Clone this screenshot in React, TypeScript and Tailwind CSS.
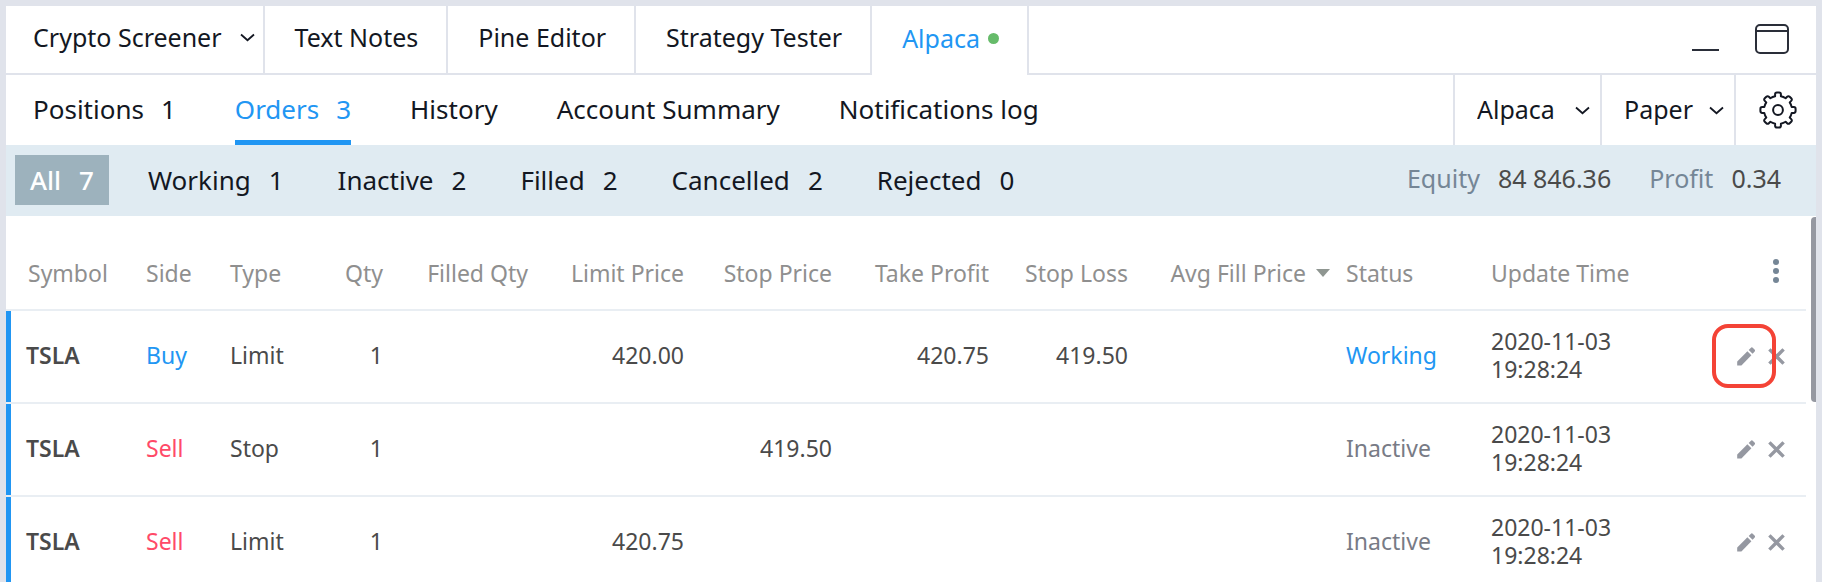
import type { ReactNode } from "react";

const DARK = "text-[#131722]";

function Chevron() {
  return (
    <svg width="15" height="9" viewBox="0 0 15 9" fill="none" stroke="#131722" strokeWidth="1.8" aria-hidden="true">
      <path d="M1 1.5 7.5 7.2 14 1.5" />
    </svg>
  );
}

function GearIcon() {
  const teeth = [0, 45, 90, 135, 180, 225, 270, 315];
  const point = (deg: number, x: number, y: number) => {
    const a = (deg * Math.PI) / 180;
    const px = x * Math.cos(a) - y * Math.sin(a);
    const py = x * Math.sin(a) + y * Math.cos(a);
    return `${px.toFixed(2)} ${py.toFixed(2)}`;
  };
  const outline = teeth
    .map(
      (t, i) =>
        `${i === 0 ? `M${point(t, -2.9, -13.7)}` : `A14 14 0 0 1 ${point(t, -2.9, -13.7)}`} L${point(t, -2.9, -15.8)} Q${point(t, -2.9, -17.6)} ${point(t, -1.1, -17.6)} L${point(t, 1.1, -17.6)} Q${point(t, 2.9, -17.6)} ${point(t, 2.9, -15.8)} L${point(t, 2.9, -13.7)}`,
    )
    .join(" ");
  return (
    <svg width="38" height="38" viewBox="-19 -19 38 38" fill="none" stroke="#131722" strokeWidth="2" strokeLinejoin="round" aria-hidden="true">
      <path d={`${outline} A14 14 0 0 1 ${point(0, -2.9, -13.7)} Z`} />
      <circle r="4.9" />
    </svg>
  );
}

function PencilIcon() {
  return (
    <svg width="18" height="19" viewBox="0 0 18 19" fill="#9598a1" aria-hidden="true">
      <path d="M0.2 18.6V14.4L10.4 4.2l4 4L4.4 18.6z" />
      <path d="M11.7 2.9 13.7.9a1.6 1.6 0 0 1 2.3 0L17.5 2.4a1.6 1.6 0 0 1 0 2.3L15.6 6.8z" />
    </svg>
  );
}

function CrossIcon() {
  return (
    <svg width="17" height="17" viewBox="0 0 17 17" stroke="#9598a1" strokeWidth="3.4" aria-hidden="true">
      <path d="M1.4 1.4 15.6 15.6M15.6 1.4 1.4 15.6" />
    </svg>
  );
}

function TopTab({ children, active = false, className }: { children: ReactNode; active?: boolean; className: string }) {
  return (
    <button
      type="button"
      className={`flex h-[69px] items-center border-r-2 pb-1 ${active ? "text-[#2196f3]" : `border-b-2 ${DARK}`} border-[#e0e3eb] ${className}`}
    >
      {children}
    </button>
  );
}

function SubTab({ label, count, active = false }: { label: string; count?: number; active?: boolean }) {
  return (
    <button
      type="button"
      className={`flex items-center gap-[17px] border-b-[5px] pt-1 ${active ? "border-[#2196f3] text-[#2196f3]" : `border-transparent ${DARK}`}`}
    >
      {label}
      {count !== undefined && <span>{count}</span>}
    </button>
  );
}

function AccountSelect({ label, value, className }: { label: string; value: string; className: string }) {
  return (
    <div className={`grid items-center border-l-2 border-[#e0e3eb] ${className}`}>
      <select
        aria-label={label}
        className={`col-start-1 row-start-1 h-full w-full appearance-none bg-transparent pb-px pl-[22px] ${DARK}`}
      >
        <option>{value}</option>
      </select>
      <span className="pointer-events-none col-start-1 row-start-1 justify-self-end pr-2.5">
        <Chevron />
      </span>
    </div>
  );
}

const filters = [
  { label: "All", count: 7 },
  { label: "Working", count: 1 },
  { label: "Inactive", count: 2 },
  { label: "Filled", count: 2 },
  { label: "Cancelled", count: 2 },
  { label: "Rejected", count: 0 },
];

type Order = {
  side: "Buy" | "Sell";
  type: string;
  limit?: string;
  stop?: string;
  takeProfit?: string;
  stopLoss?: string;
  status: "Working" | "Inactive";
  highlighted?: boolean;
};

const orders: Order[] = [
  { side: "Buy", type: "Limit", limit: "420.00", takeProfit: "420.75", stopLoss: "419.50", status: "Working", highlighted: true },
  { side: "Sell", type: "Stop", stop: "419.50", status: "Inactive" },
  { side: "Sell", type: "Limit", limit: "420.75", status: "Inactive" },
];

const HEAD = "border-b-2 border-[#e9eef3] pb-[22px] align-bottom font-normal";
const CELL = "border-b-2 border-[#e9eef3] pb-1";

function OrderRow({ order }: { order: Order }) {
  return (
    <tr className="h-[93px]">
      <td className={`${CELL} pl-5 font-semibold shadow-[inset_5px_0_0_#2196f3]`}>TSLA</td>
      <td className={`${CELL} pl-4 ${order.side === "Buy" ? "text-[#2196f3]" : "text-[#ff4a68]"}`}>{order.side}</td>
      <td className={`${CELL} pl-4`}>{order.type}</td>
      <td className={`${CELL} pr-4 text-right`}>1</td>
      <td className={CELL} />
      <td className={`${CELL} pr-4 text-right`}>{order.limit}</td>
      <td className={`${CELL} pr-4 text-right`}>{order.stop}</td>
      <td className={`${CELL} pr-4 text-right`}>{order.takeProfit}</td>
      <td className={`${CELL} pr-4 text-right`}>{order.stopLoss}</td>
      <td className={CELL} />
      <td className={`${CELL} pl-4 ${order.status === "Working" ? "text-[#2196f3]" : "text-[#787b86]"}`}>{order.status}</td>
      <td className={`${CELL} pl-4 whitespace-normal`}>2020-11-03 19:28:24</td>
      <td className="border-b-2 border-[#e9eef3] pr-[21px]">
        <div className="flex items-center justify-end gap-[13px]">
          <button type="button" aria-label="Edit order" className="relative">
            <PencilIcon />
            {order.highlighted && (
              <span className="pointer-events-none absolute -top-[23px] -left-[25px] z-10 size-16 rounded-2xl border-4 border-[#f44336]" />
            )}
          </button>
          <button type="button" aria-label="Cancel order">
            <CrossIcon />
          </button>
        </div>
      </td>
    </tr>
  );
}

export default function App() {
  return (
    <div className="h-screen overflow-hidden bg-[#e0e3eb] px-1.5 pt-1.5 font-['Noto_Sans',sans-serif]">
      <main className="flex h-full flex-col bg-white">
        <header className="flex text-[25px]">
          <nav className="flex whitespace-nowrap">
            <TopTab className="gap-[18px] pr-2 pl-[27px]">
              Crypto Screener <Chevron />
            </TopTab>
            <TopTab className="pr-7 pl-[30px]">Text Notes</TopTab>
            <TopTab className="pr-7 pl-[30px]">Pine Editor</TopTab>
            <TopTab className="pr-7 pl-[30px]">Strategy Tester</TopTab>
            <TopTab active className="gap-2 pr-7 pl-[30px]">
              Alpaca <span className="size-[11px] rounded-full bg-[#66bb6a]" />
            </TopTab>
          </nav>
          <div className="flex flex-1 items-center justify-end gap-9 border-b-2 border-[#e0e3eb] pr-[27px]">
            <button type="button" aria-label="Minimize panel">
              <svg width="27" height="32" viewBox="0 0 27 32" stroke="#2a2e39" strokeWidth="2" aria-hidden="true">
                <path d="M0 26H27" />
              </svg>
            </button>
            <button type="button" aria-label="Maximize panel">
              <svg width="34" height="32" viewBox="0 0 34 32" fill="none" stroke="#2a2e39" strokeWidth="2" aria-hidden="true">
                <rect x="1" y="1" width="32" height="28" rx="4" />
                <path d="M1 7H33" />
              </svg>
            </button>
          </div>
        </header>

        <div className="flex h-[70px] justify-between text-[26px]">
          <nav className="flex gap-[59px] pl-[27px] whitespace-nowrap">
            <SubTab label="Positions" count={1} />
            <SubTab label="Orders" count={3} active />
            <SubTab label="History" />
            <SubTab label="Account Summary" />
            <SubTab label="Notifications log" />
          </nav>
          <div className="flex text-[25px]">
            <AccountSelect label="Broker" value="Alpaca" className="w-[147px]" />
            <AccountSelect label="Account" value="Paper" className="w-[134px]" />
            <button type="button" aria-label="Settings" className="flex w-[82px] items-center justify-center border-l-2 border-[#e0e3eb] pl-1">
              <GearIcon />
            </button>
          </div>
        </div>

        <div className="flex h-[71px] items-center justify-between bg-[#e0ebf2] pr-[35px] pl-[9px] text-[25px] whitespace-nowrap">
          <div className="flex gap-6 pb-px text-[26px]">
            {filters.map((f, i) => (
              <button
                key={f.label}
                type="button"
                className={`flex h-[50px] items-center gap-[18px] px-[15px] ${i === 0 ? "bg-[#9db2bd] font-medium text-white" : DARK}`}
              >
                {f.label}
                <span>{f.count}</span>
              </button>
            ))}
          </div>
          <dl className="flex pb-1 text-[#4a4a4a]">
            <dt className="pr-[18px] text-[#758696]">Equity</dt>
            <dd className="pr-[38px]">84 846.36</dd>
            <dt className="pr-[18px] text-[#758696]">Profit</dt>
            <dd>0.34</dd>
          </dl>
        </div>

        <div className="flex min-h-0 flex-1 items-start justify-between">
          <div className="h-full flex-1 overflow-hidden pr-[5px]">
            <table className="w-full table-fixed border-separate border-spacing-0 text-[23px] leading-7 whitespace-nowrap text-[#4a4a4a]">
              <colgroup>
                <col className="w-[124px]" />
                <col className="w-[84px]" />
                <col className="w-[86px]" />
                <col className="w-[99px]" />
                <col className="w-[145px]" />
                <col className="w-[156px]" />
                <col className="w-[148px]" />
                <col className="w-[157px]" />
                <col className="w-[139px]" />
                <col className="w-[186px]" />
                <col className="w-[145px]" />
                <col />
                <col className="w-[120px]" />
              </colgroup>
              <thead>
                <tr className="h-[95px] text-left text-[#8f8f8f]">
                  <th className={`${HEAD} pl-[22px]`}>Symbol</th>
                  <th className={`${HEAD} pl-4`}>Side</th>
                  <th className={`${HEAD} pl-4`}>Type</th>
                  <th className={`${HEAD} pr-4 text-right`}>Qty</th>
                  <th className={`${HEAD} pr-4 text-right`}>Filled Qty</th>
                  <th className={`${HEAD} pr-4 text-right`}>Limit Price</th>
                  <th className={`${HEAD} pr-4 text-right`}>Stop Price</th>
                  <th className={`${HEAD} pr-4 text-right`}>Take Profit</th>
                  <th className={`${HEAD} pr-4 text-right`}>Stop Loss</th>
                  <th className={HEAD}>
                    <span className="flex items-center justify-end gap-[10px]">
                      Avg Fill Price
                      <svg width="14" height="8" viewBox="0 0 14 8" fill="#8f9691" aria-hidden="true">
                        <path d="M0 0H14L7 8z" />
                      </svg>
                    </span>
                  </th>
                  <th className={`${HEAD} pl-4`}>Status</th>
                  <th className={`${HEAD} pl-4`}>Update Time</th>
                  <th className="border-b-2 border-[#e9eef3] pr-[27px] pb-[26px] align-bottom">
                    <button type="button" aria-label="Columns" className="ml-auto block">
                      <svg width="6" height="24" viewBox="0 0 6 24" fill="#758696" aria-hidden="true">
                        <circle cx="3" cy="3" r="3" />
                        <circle cx="3" cy="12" r="3" />
                        <circle cx="3" cy="21" r="3" />
                      </svg>
                    </button>
                  </th>
                </tr>
              </thead>
              <tbody>
                {orders.map((order, i) => (
                  <OrderRow key={i} order={order} />
                ))}
              </tbody>
            </table>
          </div>
          <div className="mt-px h-[185px] w-[5px] rounded-l bg-[#9598a1]" />
        </div>
      </main>
    </div>
  );
}
